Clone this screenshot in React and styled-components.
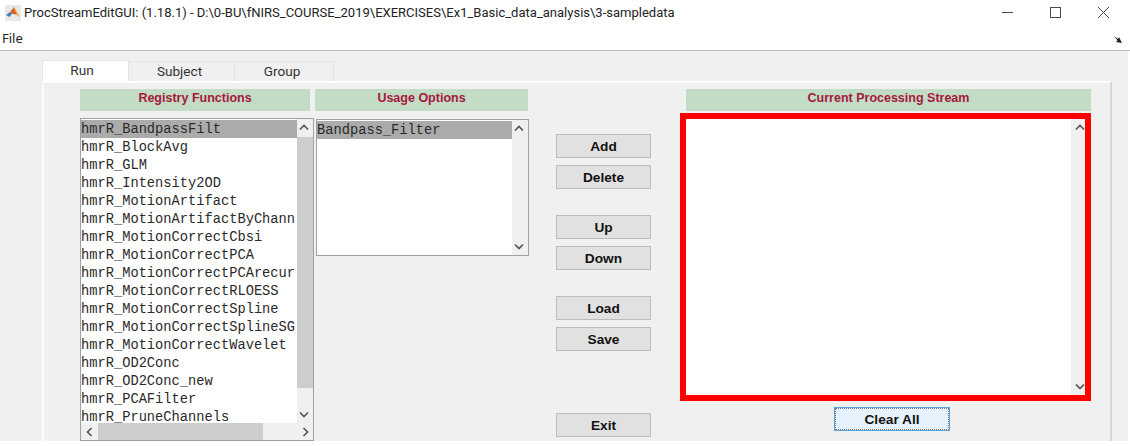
import React from "react";
import styled, { createGlobalStyle } from "styled-components";

const Global = createGlobalStyle`
  html, body { margin: 0; padding: 0; background: #fff; overflow: hidden; }
  body { width: 1130px; height: 446px; font-family: "Open Sans", "Noto Sans", sans-serif; }
  * { box-sizing: border-box; }
`;

const Page = styled.div`
  width: 1130px;
  height: 446px;
  background: #fff;
  overflow: hidden;
`;
const TitleBar = styled.div`
  height: 26px;
  display: flex;
  align-items: center;
  padding-left: 5px;
  background: #fff;
`;
const TitleText = styled.div`
  margin-left: 3px;
  font: 13.02px/20px "Roboto", "Noto Sans", sans-serif;
  color: #222;
  white-space: nowrap;
  flex: 1;
`;
const WinControls = styled.div`
  display: flex;
  width: 107px;
  height: 26px;
  align-items: center;
  margin-right: 21px;
  justify-content: space-between;
  padding-bottom: 2px;
`;
const MenuBar = styled.div`
  height: 25px;
  display: flex;
  align-items: center;
  justify-content: space-between;
  padding: 0 8px 0 2px;
  background: #fff;
  border-bottom: 1px solid #bdbdbd;
`;
const MenuItem = styled.span`
  font: 13px/18px "Noto Sans", "Open Sans", sans-serif;
  color: #222;
  margin-top: -1px;
`;
const Content = styled.div`
  width: 1128px;
  height: 390px;
  background: #f0f0f0;
  padding: 9px 0 0 42px;
  overflow: hidden;
`;
const Tabs = styled.div`
  display: flex;
  height: 21px;
  align-items: flex-end;
`;
const Tab = styled.div`
  width: ${(p) => p.$w}px;
  height: ${(p) => (p.$active ? 21 : 20)}px;
  padding-right: ${(p) => p.$pr}px;
  background: ${(p) => (p.$active ? "#fff" : "#f0f0f0")};
  border: 1px solid #e4e4e4;
  border-bottom: none;
  border-left: ${(p) => (p.$active ? "1px solid #e4e4e4" : "none")};
  text-align: center;
  font: 13.6px/${(p) => (p.$active ? 18 : 19)}px "Roboto", "Noto Sans", sans-serif;
  color: #333;
`;
const Panel = styled.div`
  width: 1070px;
  height: 380px;
  border-top: 2px solid #fdfdfd;
  border-left: 2px solid #fbfbfb;
  border-right: 2px solid #d6d6d6;
  padding: 6px 0 0 36px;
  display: flex;
`;
const ColOne = styled.div`
  width: 234px;
  display: flex;
  flex-direction: column;
`;
const ColTwo = styled.div`
  width: 214px;
  margin-left: 1px;
  display: flex;
  flex-direction: column;
`;
const ButtonCol = styled.div`
  width: 95px;
  margin-left: 27px;
  padding-top: 45px;
  display: flex;
  flex-direction: column;
  gap: 26px;
`;
const ButtonGroup = styled.div`
  display: flex;
  flex-direction: column;
  gap: 7px;
  margin-top: ${(p) => p.$mt || 0}px;
`;
const ColThree = styled.div`
  width: 411px;
  margin-left: 29px;
  display: flex;
  flex-direction: column;
`;
const Header = styled.div`
  height: 22px;
  width: ${(p) => p.$w}px;
  margin-left: ${(p) => p.$ml || 0}px;
  background: #c3dcc6;
  color: #a5183c;
  font: bold 12.5px/19px "Liberation Sans", Arial, sans-serif;
  text-align: center;
`;
const ListBox = styled.div`
  width: ${(p) => p.$w}px;
  height: ${(p) => p.$h}px;
  margin-top: ${(p) => p.$mt}px;
  margin-left: ${(p) => p.$ml || 0}px;
  border: 1px solid #a0a0a8;
  background: #fff;
  display: flex;
  flex-direction: column;
  overflow: hidden;
`;
const ListMain = styled.div`
  flex: 1;
  min-height: 0;
  display: flex;
`;
const Rows = styled.div`
  flex: 1;
  min-width: 0;
  overflow: hidden;
  padding-top: 1px;
`;
const Row = styled.div`
  height: 18px;
  background: ${(p) => (p.$selected ? "#ababab" : "#fff")};
  font: 13.72px/20px "Liberation Mono", "Courier New", monospace;
  color: #2a2a2a;
  white-space: nowrap;
  overflow: hidden;
`;
const VScroll = styled.div`
  width: ${(p) => p.$w || 16}px;
  flex: none;
  background: #f0f0f0;
  display: flex;
  flex-direction: column;
  color: #555;
`;
const ArrowCell = styled.div`
  height: ${(p) => p.$h || 17}px;
  width: ${(p) => p.$w || "100%"};
  flex: none;
  display: flex;
  align-items: center;
  justify-content: center;
  padding-right: ${(p) => p.$pr || 0}px;
  padding-left: ${(p) => p.$pl || 0}px;
  color: #555;
`;
const VThumb = styled.div`
  height: ${(p) => p.$h}px;
  background: #cdcdcd;
  flex: none;
`;
const Spacer = styled.div`
  flex: 1;
`;
const HScroll = styled.div`
  height: 17px;
  flex: none;
  background: #f0f0f0;
  display: flex;
  align-items: stretch;
`;
const HThumb = styled.div`
  width: ${(p) => p.$w}px;
  background: #cdcdcd;
  flex: none;
`;
const Button = styled.div`
  height: 24px;
  width: ${(p) => p.$w || 95}px;
  margin-left: ${(p) => p.$ml || 0}px;
  margin-top: ${(p) => p.$mt || 0}px;
  background: #e1e1e1;
  border: 1px solid #bcbcbc;
  text-align: center;
  font: bold 13.7px/24px "Liberation Sans", Arial, sans-serif;
  color: #111;
`;
const FocusButton = styled(Button)`
  background: #e5f1fb;
  border: 1px solid #5ba4dc;
  outline: 1px dotted #777;
  outline-offset: -2px;
`;
const StreamBox = styled.div`
  width: 411px;
  height: 288px;
  margin-top: 2px;
  border: 6px solid #ff0000;
  background: #fff;
  display: flex;
  justify-content: flex-end;
`;
const Glyph = styled.svg`
  display: block;
  flex: none;
  fill: none;
  stroke: currentColor;
  stroke-width: 1.7;
`;
const MenuGlyph = styled.svg`
  display: block;
  margin-top: 2px;
`;
const WinGlyph = styled.svg`
  display: block;
  fill: none;
  stroke: #4a4a4a;
  stroke-width: 1;
`;

const Chevron = ({ dir }) => {
  const d = {
    up: "M1 6.5 L5 2.5 L9 6.5",
    down: "M1 3.5 L5 7.5 L9 3.5",
    left: "M6.5 1 L2.5 5 L6.5 9",
    right: "M3.5 1 L7.5 5 L3.5 9",
  }[dir];
  return (
    <Glyph width="10" height="10" viewBox="0 0 10 10">
      <path d={d} />
    </Glyph>
  );
};

const VerticalBar = ({ thumb }) => (
  <VScroll>
    <ArrowCell $h={18} $pr={2}><Chevron dir="up" /></ArrowCell>
    {thumb ? <VThumb $h={thumb} /> : null}
    <Spacer />
    <ArrowCell $h={18} $pr={2}><Chevron dir="down" /></ArrowCell>
  </VScroll>
);

const MatlabIcon = () => (
  <svg width="16" height="16" viewBox="0 0 16 16">
    <rect x="0" y="0" width="16" height="16" fill="#e8e8e8" />
    <path d="M1 10 L5 7 L7 9 L4.5 12 Z" fill="#3f7fc4" />
    <path d="M5 7 L9 2 L12 10 L9 9 L7 9 Z" fill="#d9622b" />
    <path d="M9 2 L12 10 L15 12.5 L11 5 Z" fill="#f2a33a" />
  </svg>
);

const regs = [
  "hmrR_BandpassFilt",
  "hmrR_BlockAvg",
  "hmrR_GLM",
  "hmrR_Intensity2OD",
  "hmrR_MotionArtifact",
  "hmrR_MotionArtifactByChann",
  "hmrR_MotionCorrectCbsi",
  "hmrR_MotionCorrectPCA",
  "hmrR_MotionCorrectPCArecur",
  "hmrR_MotionCorrectRLOESS",
  "hmrR_MotionCorrectSpline",
  "hmrR_MotionCorrectSplineSG",
  "hmrR_MotionCorrectWavelet",
  "hmrR_OD2Conc",
  "hmrR_OD2Conc_new",
  "hmrR_PCAFilter",
  "hmrR_PruneChannels",
];

export default function App() {
  return (
    <Page>
      <Global />
      <TitleBar>
        <MatlabIcon />
        <TitleText>ProcStreamEditGUI: (1.18.1) - D:\0-BU\fNIRS_COURSE_2019\EXERCISES\Ex1_Basic_data_analysis\3-sampledata</TitleText>
        <WinControls>
          <WinGlyph width="11" height="11" viewBox="0 0 11 11"><path d="M0 5.5 H11" /></WinGlyph>
          <WinGlyph width="11" height="11" viewBox="0 0 11 11"><rect x="0.5" y="0.5" width="10" height="10" /></WinGlyph>
          <WinGlyph width="11" height="11" viewBox="0 0 11 11"><path d="M0 0 L11 11 M11 0 L0 11" /></WinGlyph>
        </WinControls>
      </TitleBar>
      <MenuBar>
        <MenuItem>File</MenuItem>
        <MenuGlyph width="8" height="7" viewBox="0 0 8 7">
          <path d="M0 0 L4 3 L5 1 L8 7 L2 6 L3.5 4.5 Z" fill="#222" />
        </MenuGlyph>
      </MenuBar>
      <Content>
        <Tabs>
          <Tab $w={87} $pr={7} $active>Run</Tab>
          <Tab $w={106} $pr={4}>Subject</Tab>
          <Tab $w={99} $pr={4}>Group</Tab>
        </Tabs>
        <Panel>
          <ColOne>
            <Header $w={230}>Registry Functions</Header>
            <ListBox $w={234} $h={323} $mt={7}>
              <ListMain>
                <Rows>
                  {regs.map((r, i) => (
                    <Row key={r} $selected={i === 0}>{r}</Row>
                  ))}
                </Rows>
                <VerticalBar thumb={251} />
              </ListMain>
              <HScroll>
                <ArrowCell $w="17px"><Chevron dir="left" /></ArrowCell>
                <HThumb $w={165} />
                <Spacer />
                <ArrowCell $w="17px"><Chevron dir="right" /></ArrowCell>
              </HScroll>
            </ListBox>
          </ColOne>
          <ColTwo>
            <Header $w={213}>Usage Options</Header>
            <ListBox $w={213} $h={137} $mt={8} $ml={1}>
              <ListMain>
                <Rows>
                  <Row $selected>Bandpass_Filter</Row>
                </Rows>
                <VerticalBar />
              </ListMain>
            </ListBox>
          </ColTwo>
          <ButtonCol>
            <ButtonGroup>
              <Button>Add</Button>
              <Button>Delete</Button>
            </ButtonGroup>
            <ButtonGroup>
              <Button>Up</Button>
              <Button>Down</Button>
            </ButtonGroup>
            <ButtonGroup>
              <Button>Load</Button>
              <Button>Save</Button>
            </ButtonGroup>
            <ButtonGroup $mt={36}>
              <Button>Exit</Button>
            </ButtonGroup>
          </ButtonCol>
          <ColThree>
            <Header $w={405} $ml={6}>Current Processing Stream</Header>
            <StreamBox>
              <VScroll $w={14}>
                <ArrowCell $h={18} $pl={4}><Chevron dir="up" /></ArrowCell>
                <Spacer />
                <ArrowCell $h={18} $pl={4}><Chevron dir="down" /></ArrowCell>
              </VScroll>
            </StreamBox>
            <FocusButton $w={116} $ml={154} $mt={6}>Clear All</FocusButton>
          </ColThree>
        </Panel>
      </Content>
    </Page>
  );
}
